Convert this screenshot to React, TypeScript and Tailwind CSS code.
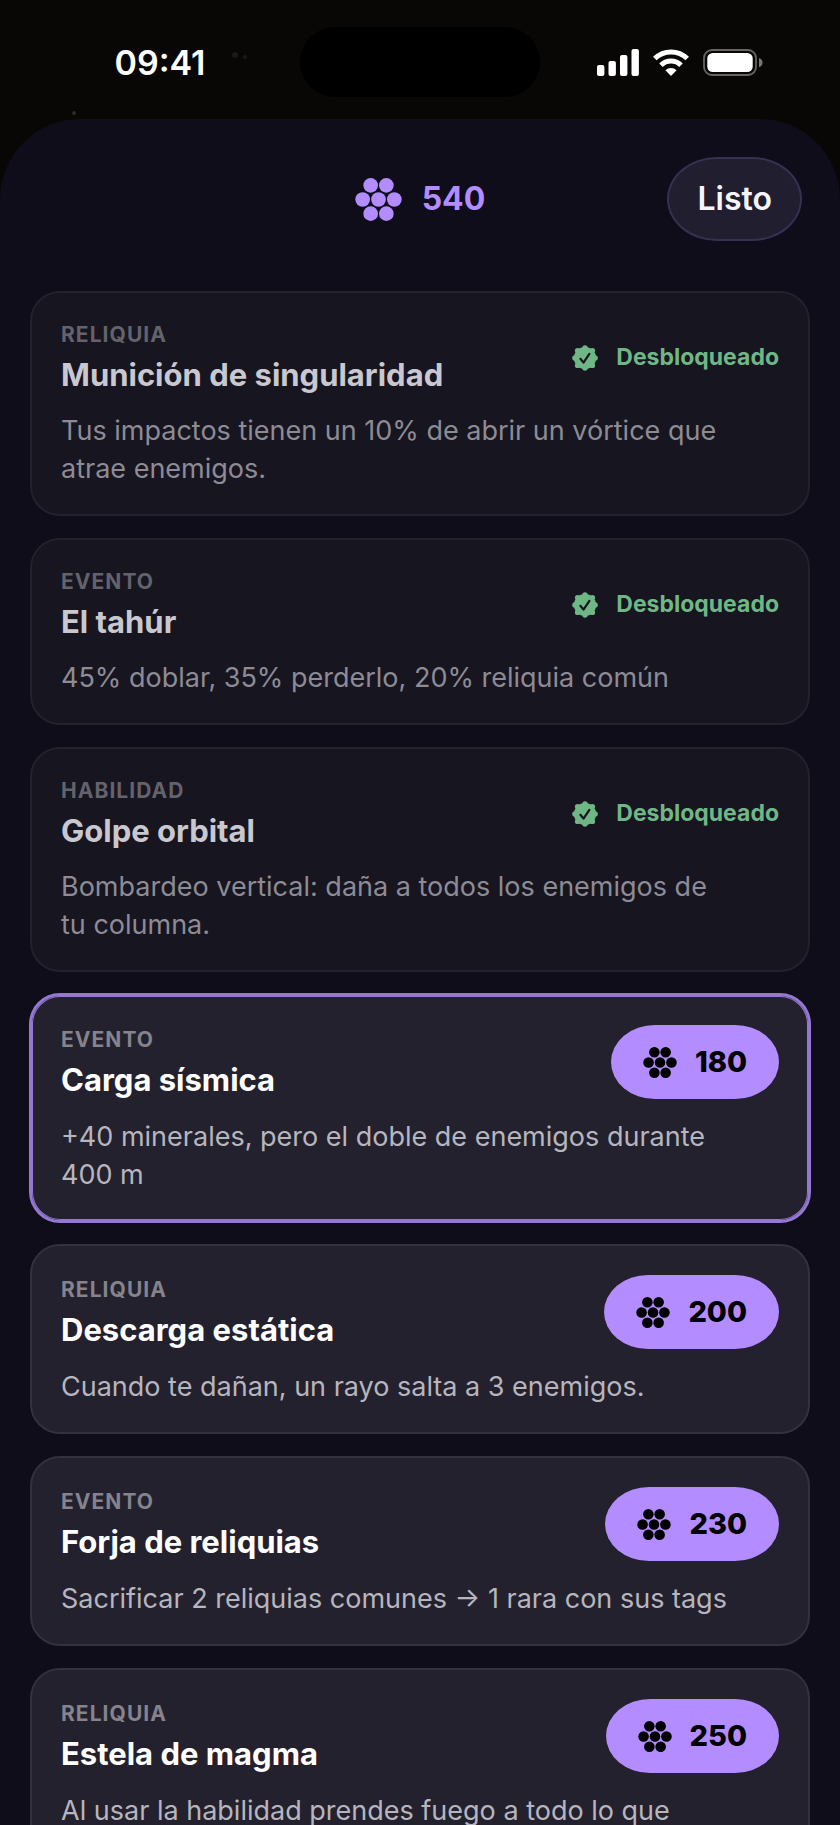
type Unlockable = {
  kind: string
  name: string
  description: string
  price?: number
  highlighted?: boolean
}

const unlockables: Unlockable[] = [
  { kind: 'Reliquia', name: 'Munición de singularidad', description: 'Tus impactos tienen un 10% de abrir un vórtice que atrae enemigos.' },
  { kind: 'Evento', name: 'El tahúr', description: '45% doblar, 35% perderlo, 20% reliquia común' },
  { kind: 'Habilidad', name: 'Golpe orbital', description: 'Bombardeo vertical: daña a todos los enemigos de tu columna.' },
  { kind: 'Evento', name: 'Carga sísmica', description: '+40 minerales, pero el doble de enemigos durante 400 m', price: 180, highlighted: true },
  { kind: 'Reliquia', name: 'Descarga estática', description: 'Cuando te dañan, un rayo salta a 3 enemigos.', price: 200 },
  { kind: 'Evento', name: 'Forja de reliquias', description: 'Sacrificar 2 reliquias comunes → 1 rara con sus tags', price: 230 },
  { kind: 'Reliquia', name: 'Estela de magma', description: 'Al usar la habilidad prendes fuego a todo lo que', price: 250 },
]

function MineralIcon({ className }: { className: string }) {
  return (
    <svg viewBox="0 0 141 129" className={className} fill="currentColor" aria-hidden="true">
      <circle cx="47" cy="22" r="22" />
      <circle cx="94" cy="22" r="22" />
      <circle cx="23" cy="64.5" r="22" />
      <circle cx="70.5" cy="64.5" r="22" />
      <circle cx="118" cy="64.5" r="22" />
      <circle cx="47" cy="107" r="22" />
      <circle cx="94" cy="107" r="22" />
    </svg>
  )
}

function SealIcon() {
  return (
    <svg viewBox="0 0 26 26" className="size-[26px]" aria-hidden="true">
      <g fill="#6fb785">
        <circle cx="13" cy="13" r="11.1" />
        <circle cx="13" cy="2.9" r="2.7" />
        <circle cx="20.4" cy="5.6" r="2.7" />
        <circle cx="23.1" cy="13" r="2.7" />
        <circle cx="20.4" cy="20.4" r="2.7" />
        <circle cx="13" cy="23.1" r="2.7" />
        <circle cx="5.6" cy="20.4" r="2.7" />
        <circle cx="2.9" cy="13" r="2.7" />
        <circle cx="5.6" cy="5.6" r="2.7" />
      </g>
      <path d="M8.4 13.8 L11.5 17.6 L17.4 8.8" fill="none" stroke="#171520" strokeWidth="2.2" strokeLinecap="round" strokeLinejoin="round" />
    </svg>
  )
}

function StatusBar() {
  return (
    <div className="relative grid h-[119px] grid-cols-[1fr_240px_1fr] pt-[27px]">
      {/* faint stars */}
      <span className="absolute left-[232px] top-[52px] size-[6px] rounded-full bg-[#1a1918]" />
      <span className="absolute left-[243px] top-[55px] size-[4px] rounded-full bg-[#1a1918]" />
      <span className="absolute left-[72px] top-[111px] size-[4px] rounded-full bg-[#2c2b29]" />

      <div className="flex h-[70px] items-center justify-center pl-5 text-[34px] font-semibold text-white">09:41</div>
      <div className="h-[70px] rounded-full bg-black" />
      <div className="flex h-[70px] items-center justify-center gap-[14px] pr-5 text-white">
        <svg viewBox="0 0 42 27" className="h-[27px] w-[42px]" fill="currentColor" aria-label="Cobertura">
          <rect x="0" y="16" width="7.4" height="11" rx="2" />
          <rect x="11.5" y="12" width="7.4" height="15" rx="2" />
          <rect x="23" y="6" width="7.4" height="21" rx="2" />
          <rect x="34.5" y="0" width="7.4" height="27" rx="2" />
        </svg>
        <svg viewBox="0 0 36 27" className="h-[27px] w-[36px]" aria-label="Wi-Fi">
          <g fill="none" stroke="currentColor" strokeWidth="5">
            <path d="M1.8 9.6 A23 23 0 0 1 34.2 9.6" />
            <path d="M8 16.2 A14.2 14.2 0 0 1 28 16.2" />
          </g>
          <path d="M18 27 L12.4 21.2 A8.3 8.3 0 0 1 23.6 21.2 Z" fill="currentColor" />
        </svg>
        <svg viewBox="0 0 60 27" className="h-[27px] w-[60px]" aria-label="Batería">
          <rect x="1" y="1" width="52" height="25" rx="8" fill="none" stroke="#666563" strokeWidth="1.8" />
          <rect x="4.3" y="4" width="45.4" height="19" rx="5.5" fill="currentColor" />
          <path d="M56 9 Q59.5 10 59.5 13.6 Q59.5 17.2 56 18.2 Z" fill="#777674" />
        </svg>
      </div>
    </div>
  )
}

function cardColors(item: Unlockable) {
  if (item.highlighted) return 'border-[#9478d2] bg-[#23212e] ring-1 ring-[#9478d2] inset-ring-1 inset-ring-[#9478d2]'
  if (item.price) return 'border-[#33313d] bg-[#23212e]'
  return 'border-[#23212c] bg-[#171520]'
}

function UnlockableCard({ item }: { item: Unlockable }) {
  const owned = item.price === undefined

  return (
    <li className={`rounded-[30px] border-2 px-[29px] pt-[29px] pb-[26px] ${cardColors(item)}`}>
      <div className="flex items-center justify-between">
        <div>
          <p className={`text-[21px] leading-[26px] font-bold tracking-wider uppercase ${owned ? 'text-[#64626b]' : 'text-[#85838c]'}`}>
            {item.kind}
          </p>
          <h2 className={`mt-2 text-[31px] leading-[37px] font-bold ${owned ? 'text-[#cac8cf]' : 'text-white'}`}>{item.name}</h2>
        </div>

        {owned ? (
          <div className="flex items-center gap-[18px] text-[23px] font-bold text-[#6fb785]">
            <SealIcon />
            Desbloqueado
          </div>
        ) : (
          <button
            type="button"
            className="flex h-[74px] items-center gap-[18px] rounded-[44px/37px] bg-[#b38cff] px-8 text-[29px] font-extrabold text-black"
          >
            <MineralIcon className="h-[31px] w-[34px]" />
            {item.price}
          </button>
        )}
      </div>
      <p className={`mt-[19px] pr-12 text-[27px] leading-[38px] ${owned ? 'text-[#8d8b94]' : 'text-[#b7b5bd]'}`}>{item.description}</p>
    </li>
  )
}

export default function App() {
  return (
    <div className="h-screen overflow-hidden bg-[#080705] font-['Inter',sans-serif]">
      <StatusBar />
      <main className="min-h-full rounded-t-[80px] bg-[#0f0d1a]">
        <header className="grid grid-cols-[1fr_auto_1fr] items-center px-[38px] pt-[38px]">
          <div className="col-start-2 flex items-center gap-5 text-[32px] font-bold text-[#b38cff]">
            <MineralIcon className="h-[43px] w-[47px]" />
            540
          </div>
          <button
            type="button"
            className="h-[84px] justify-self-end rounded-[50px/42px] border-2 border-[#353150] bg-[#201e2f] px-7 text-[32px] font-semibold text-[#f6f5fb]"
          >
            Listo
          </button>
        </header>

        <ul className="mt-[50px] flex flex-col gap-[22px] px-[30px]">
          {unlockables.map((item) => (
            <UnlockableCard key={item.name} item={item} />
          ))}
        </ul>
      </main>
    </div>
  )
}
